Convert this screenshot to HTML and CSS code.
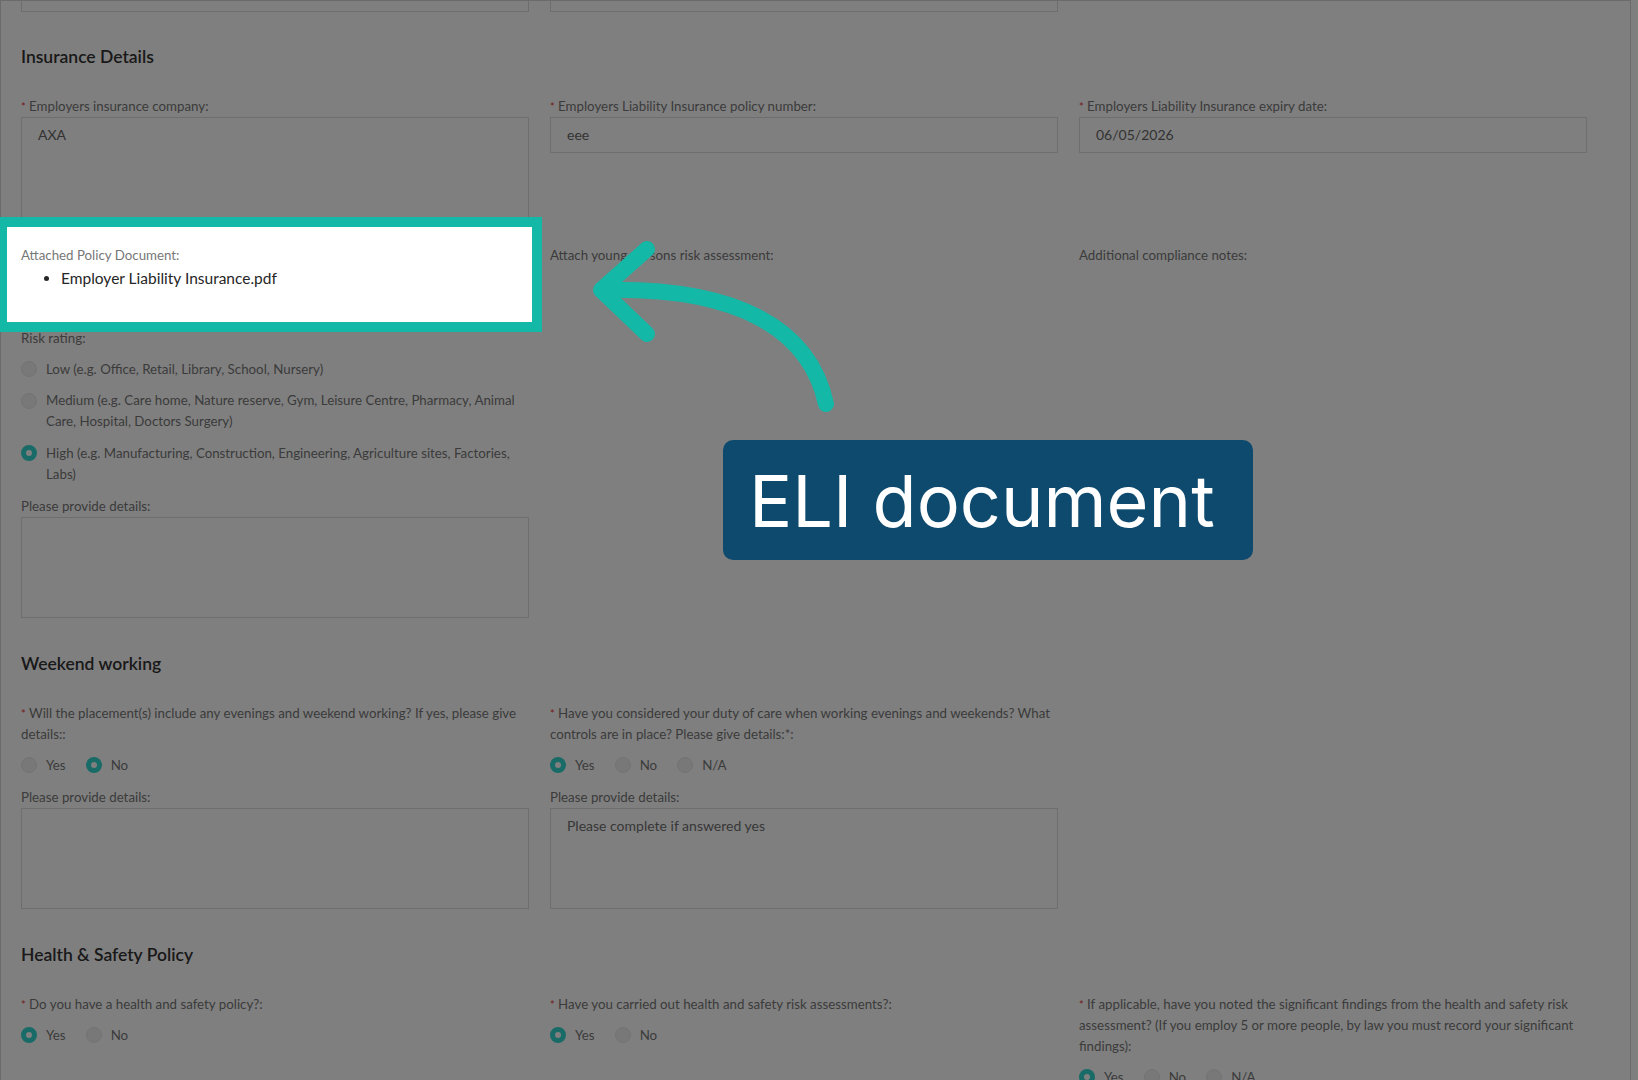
FILE: index.html
```html
<!DOCTYPE html>
<html lang="en">
<head>
<meta charset="utf-8">
<title>Compliance form – ELI document</title>
<link rel="stylesheet" href="styles.css">
</head>
<body>
<div class="panel">
  <div class="grid prev">
    <div class="stub"></div>
    <div class="stub"></div>
  </div>

  <h3 class="section-title first">Insurance Details</h3>
  <div class="grid">
    <div class="field">
      <div class="label"><span class="req">*</span> Employers insurance company:</div>
      <div class="textarea">AXA</div>
    </div>
    <div class="field">
      <div class="label"><span class="req">*</span> Employers Liability Insurance policy number:</div>
      <div class="input">eee</div>
    </div>
    <div class="field">
      <div class="label"><span class="req">*</span> Employers Liability Insurance expiry date:</div>
      <div class="input">06/05/2026</div>
    </div>

    <div class="field highlight">
      <div class="label">Attached Policy Document:</div>
      <ul class="files">
        <li>Employer Liability Insurance.pdf</li>
      </ul>
    </div>
    <div class="field">
      <div class="label">Attach young persons risk assessment:</div>
    </div>
    <div class="field">
      <div class="label">Additional compliance notes:</div>
    </div>

    <div class="field">
      <div class="label">Risk rating:</div>
      <div class="radio-list">
        <div class="option"><span class="radio"></span><span>Low (e.g. Office, Retail, Library, School, Nursery)</span></div>
        <div class="option"><span class="radio"></span><span>Medium (e.g. Care home, Nature reserve, Gym, Leisure Centre, Pharmacy, Animal Care, Hospital, Doctors Surgery)</span></div>
        <div class="option"><span class="radio on"></span><span>High (e.g. Manufacturing, Construction, Engineering, Agriculture sites, Factories, Labs)</span></div>
      </div>
      <div class="label sub">Please provide details:</div>
      <div class="textarea"></div>
    </div>
  </div>

  <h3 class="section-title">Weekend working</h3>
  <div class="grid">
    <div class="field">
      <div class="label"><span class="req">*</span> Will the placement(s) include any evenings and weekend working? If yes, please give details::</div>
      <div class="radio-row">
        <div class="option"><span class="radio"></span><span>Yes</span></div>
        <div class="option"><span class="radio on"></span><span>No</span></div>
      </div>
      <div class="label sub">Please provide details:</div>
      <div class="textarea"></div>
    </div>
    <div class="field">
      <div class="label"><span class="req">*</span> Have you considered your duty of care when working evenings and weekends? What controls are in place? Please give details:*:</div>
      <div class="radio-row">
        <div class="option"><span class="radio on"></span><span>Yes</span></div>
        <div class="option"><span class="radio"></span><span>No</span></div>
        <div class="option"><span class="radio"></span><span>N/A</span></div>
      </div>
      <div class="label sub">Please provide details:</div>
      <div class="textarea placeholder">Please complete if answered yes</div>
    </div>
  </div>

  <h3 class="section-title">Health &amp; Safety Policy</h3>
  <div class="grid">
    <div class="field">
      <div class="label"><span class="req">*</span> Do you have a health and safety policy?:</div>
      <div class="radio-row">
        <div class="option"><span class="radio on"></span><span>Yes</span></div>
        <div class="option"><span class="radio"></span><span>No</span></div>
      </div>
    </div>
    <div class="field">
      <div class="label"><span class="req">*</span> Have you carried out health and safety risk assessments?:</div>
      <div class="radio-row">
        <div class="option"><span class="radio on"></span><span>Yes</span></div>
        <div class="option"><span class="radio"></span><span>No</span></div>
      </div>
    </div>
    <div class="field">
      <div class="label"><span class="req">*</span> If applicable, have you noted the significant findings from the health and safety risk assessment? (If you employ 5 or more people, by law you must record your significant findings):</div>
      <div class="radio-row">
        <div class="option"><span class="radio on"></span><span>Yes</span></div>
        <div class="option"><span class="radio"></span><span>No</span></div>
        <div class="option"><span class="radio"></span><span>N/A</span></div>
      </div>
    </div>
  </div>
</div>

<div class="overlay"></div>

<svg class="arrow" width="1638" height="1080" viewBox="0 0 1638 1080" aria-hidden="true">
  <path d="M826 404 C 810 330 740 287 603 290" />
  <path d="M647 249 L 601 290 L 647 334" />
</svg>

<div class="callout">ELI document</div>
</body>
</html>
```

FILE: styles.css
```css
html, body {
  margin: 0;
  padding: 0;
  overflow: hidden;
  background: #ffffff;
}

body {
  font-family: "Lato", "Liberation Sans", sans-serif;
  color: #333333;
  position: relative;
  width: 1638px;
  height: 1080px;
}

.panel {
  width: 1631px;
  box-sizing: border-box;
  border-left: 1px solid #d6d6d6;
  border-right: 1px solid #d6d6d6;
  border-top: 1px solid #d6d6d6;
  padding: 0 42px 0 20px;
  min-height: 1200px;
}

.grid {
  display: grid;
  grid-template-columns: repeat(3, 508px);
  column-gap: 21px;
  row-gap: 27.5px;
  align-items: start;
}

.prev .stub {
  height: 11px;
  border: 1px solid #dddddd;
  border-top: none;
  box-sizing: border-box;
}

.section-title {
  margin: 34px 0 27px;
  font-size: 17.5px;
  line-height: 24px;
  font-weight: 600;
  color: #333333;
}

.section-title.first {
  margin-top: 32.5px;
}

.field {
  font-size: 13.3px;
}

.label {
  font-size: 13.3px;
  line-height: 21px;
  color: #777777;
}

.label.sub {
  margin-top: 11px;
}

.req {
  color: #e53935;
  font-size: 11px;
}

.input,
.textarea {
  border: 1px solid #dddddd;
  box-sizing: border-box;
  font-size: 14px;
  color: #666666;
  padding: 0 16px;
}

.input {
  height: 36.5px;
  line-height: 34.5px;
}

.textarea {
  height: 101px;
  line-height: 20px;
  padding-top: 7px;
}

.textarea.placeholder {
  color: #6f6f6f;
}

.files {
  margin: 2px 0 11px;
  padding-left: 40px;
  font-size: 15.5px;
  font-weight: 400;
  line-height: 21px;
  color: #262626;
}

.radio-list {
  margin-top: 10px;
  display: flex;
  flex-direction: column;
  gap: 10.5px;
}

.radio-row {
  margin-top: 10px;
  display: flex;
}

.option {
  display: flex;
  align-items: flex-start;
  line-height: 21px;
  font-size: 13.3px;
  color: #777777;
}

.radio-row .option {
  margin-right: 20px;
}

.radio {
  flex: none;
  width: 16px;
  height: 16px;
  margin-top: 2.5px;
  margin-right: 9px;
  border-radius: 50%;
  background: #f1f1f1;
  border: 1px solid #e6e6e6;
  box-sizing: border-box;
}

.radio.on {
  background: #ffffff;
  border: 5px solid #30d6cc;
}

/* Dimming overlay for the walkthrough step */
.overlay {
  position: fixed;
  inset: 0;
  background: rgba(0, 0, 0, 0.5);
  z-index: 10;
}

/* Highlighted field sits above the overlay */
.highlight {
  position: relative;
  z-index: 20;
}

.highlight::before {
  content: "";
  position: absolute;
  left: -24px;
  top: -28px;
  width: 545px;
  height: 115px;
  box-sizing: border-box;
  border: 10px solid #13b9a6;
  background: #ffffff;
  z-index: -1;
}

.arrow {
  position: absolute;
  left: 0;
  top: 0;
  z-index: 20;
  pointer-events: none;
}

.arrow path {
  fill: none;
  stroke: #13b9a6;
  stroke-width: 16;
  stroke-linecap: round;
  stroke-linejoin: round;
}

.callout {
  position: absolute;
  left: 723px;
  top: 440px;
  width: 530px;
  height: 120px;
  box-sizing: border-box;
  padding-left: 26px;
  display: flex;
  align-items: center;
  background: #0e4a6e;
  border-radius: 10px;
  color: #ffffff;
  font-family: "Inter", "Lato", sans-serif;
  font-size: 72px;
  font-weight: 400;
  z-index: 20;
}
```
